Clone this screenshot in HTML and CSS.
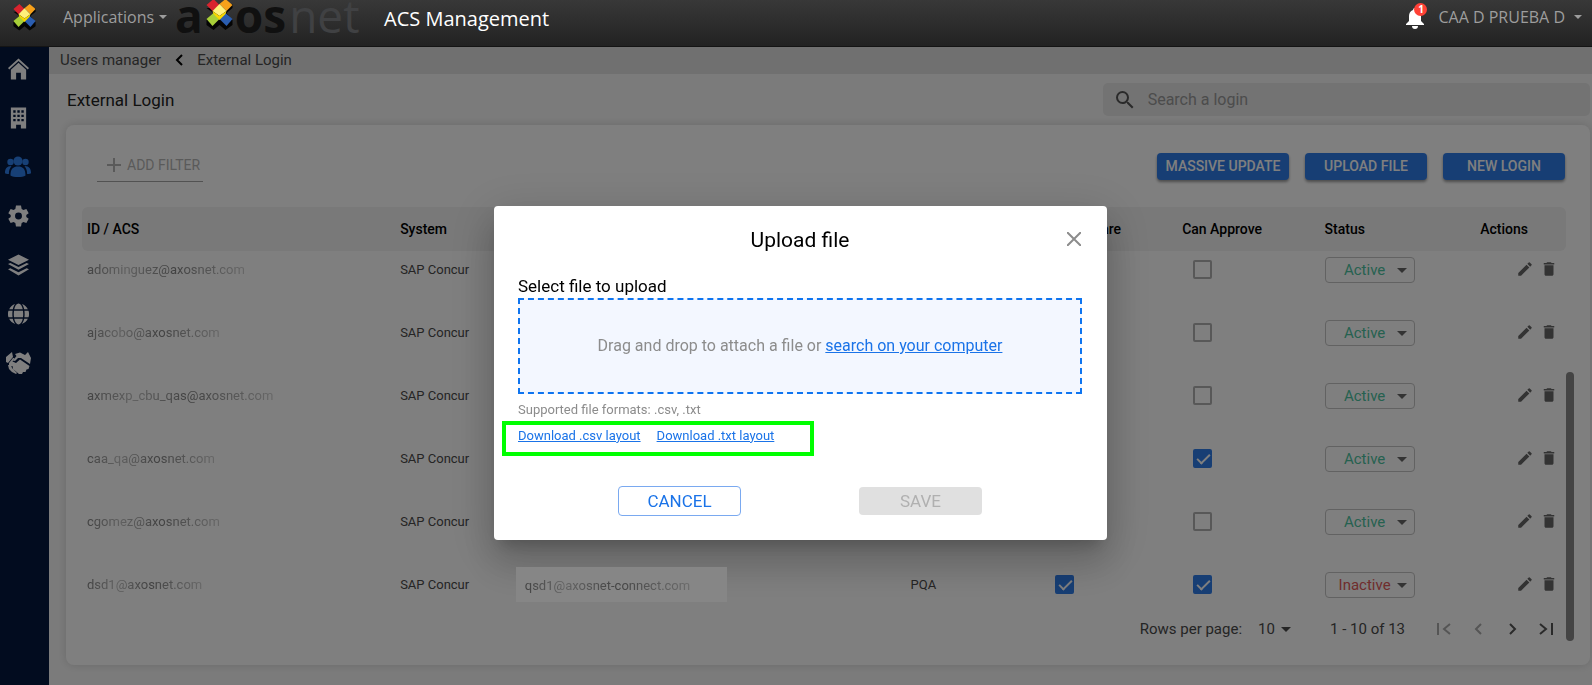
FILE: index.html
```
<!DOCTYPE html>
<html lang="en">
<head>
  <meta charset="UTF-8" />
  <meta name="viewport" content="width=device-width, initial-scale=1.0"/>
  <title>ACS Management</title>
  <link rel="stylesheet" href="styles.css">
</head>
<body>

  <!-- shared icons -->
  <svg class="defs" aria-hidden="true">
    <symbol id="cube" viewBox="0 0 28 34">
      <path fill="#050505" d="M1 9l7 5-7 7 0 5 7 5 6-5 6 5 7-5v-5l-6-7 6-5v-4l-13 4z"/>
      <path fill="#d9232e" d="M1 6l7-6 6 6-7 6z"/>
      <path fill="#f7a11a" d="M14 5l6-5 7 6-6 6z"/>
      <path fill="#a8cf38" d="M1 20l7-6 6 6-7 7z"/>
      <path fill="#2a5db0" d="M14 20l6-6 7 6-6 7z"/>
      <path fill="#fff07a" d="M7 12l7-7 7 7-7 5z"/>
      <path fill="#f8d800" d="M7 12l7 5 7-5-1 3-6 6-6-6z"/>
    </symbol>
    <symbol id="pencil" viewBox="0 0 24 24"><path d="M3 17.25V21h3.75L17.81 9.94l-3.75-3.75L3 17.25zM20.71 7.04a1 1 0 0 0 0-1.41l-2.34-2.34a1 1 0 0 0-1.41 0l-1.83 1.83 3.75 3.75 1.83-1.83z"/></symbol>
    <symbol id="trash" viewBox="0 0 24 24"><path d="M6 19c0 1.1.9 2 2 2h8c1.1 0 2-.9 2-2V7H6v12zM19 4h-3.5l-1-1h-5l-1 1H5v2h14V4z"/></symbol>
  </svg>

  <header class="topbar">
    <svg class="mark" aria-hidden="true"><use href="#cube"/></svg>
    <button class="menu apps">Applications <i class="caret"></i></button>
    <div class="brand"><b>a</b><svg class="brand-x" aria-hidden="true"><use href="#cube"/></svg><b>os</b><span>net</span></div>
    <h1>ACS Management</h1>
    <button class="bell" aria-label="Notifications">
      <svg viewBox="0 0 20 22"><path fill="#fff" d="M10 1a2 2 0 0 1 2 2c3 1 4 3.500 4 6v5l3 3v1H1v-1l3-3V9c0-2.500 1-5 4-6a2 2 0 0 1 2-2zM7 19h6a3 3 0 0 1-6 0z"/></svg>
      <span class="badge">1</span>
    </button>
    <button class="menu user">CAA D PRUEBA D <i class="caret"></i></button>
  </header>

  <div class="layout">
    <nav class="sidebar">
      <a href="#" aria-label="Home"><svg viewBox="0 0 22 22"><path d="M11 0l11 10-1.300 1.400L11 2.700 1.300 11.400 0 10z"/><path d="M11 4.500l8 7.200V22h-5.500v-7h-5v7H3V11.700z"/></svg></a>
      <a href="#" aria-label="Companies"><svg viewBox="0 0 22 22"><path fill-rule="evenodd" d="M3 0h16v22h-5.500v-4h-5v4H3zM5.500 3v2.500H8V3zM9.800 3v2.500h2.500V3zM14 3v2.500h2.500V3zM5.500 7.500V10H8V7.500zM9.800 7.500V10h2.500V7.500zM14 7.500V10h2.500V7.500zM5.500 12v2.500H8V12zM9.800 12v2.500h2.500V12zM14 12v2.500h2.500V12z"/></svg></a>
      <a href="#" class="active" aria-label="Users"><svg class="wide" viewBox="0 0 26 22"><circle cx="13" cy="5" r="4.600"/><circle cx="5.500" cy="6" r="3.200"/><circle cx="20.500" cy="6" r="3.200"/><path d="M5.500 19.500C5.500 13 8 10.500 13 10.500s7.500 2.500 7.500 9c-3 2-12 2-15 0zM0 17c0-4 1.500-7 6.500-7-2 2.500-2.600 5-2.600 8-2 0-3.900-.3-3.900-1zM26 17c0-4-1.500-7-6.500-7 2 2.500 2.600 5 2.600 8 2 0 3.900-.3 3.900-1z"/></svg></a>
      <a href="#" aria-label="Settings"><svg viewBox="2 2 20 20"><path d="M19.400 13a7.500 7.500 0 0 0 0-2l2.300-1.700-2.200-4-2.800 1.100a7 7 0 0 0-1.700-1L14.400 2H9.600L9 5.400a7 7 0 0 0-1.700 1L4.500 5.300l-2.200 4L4.600 11a7.500 7.500 0 0 0 0 2l-2.300 1.700 2.200 4 2.800-1.100a7 7 0 0 0 1.700 1l.6 3.400h4.800l.6-3.400a7 7 0 0 0 1.700-1l2.800 1.100 2.200-4zM12 15.300a3.300 3.300 0 1 1 0-6.600 3.300 3.300 0 0 1 0 6.600z"/></svg></a>
      <a href="#" aria-label="Layers"><svg viewBox="0 0 22 22"><path d="M11 0l11 5.500L11 11 0 5.500zM0 10l2.500-1.200L11 13l8.500-4.200L22 10l-11 6zM0 15.500l2.500-1.200L11 18.500l8.500-4.200 2.500 1.200L11 22z"/></svg></a>
      <a href="#" aria-label="Regions"><svg viewBox="0 0 22 22"><path d="M11 0c2 0 3.800 2.500 4.500 6h-9C7.200 2.500 9 0 11 0zM7.500 .6C6.300 2 5.500 4 5 6H1.200C2.500 3.400 4.700 1.500 7.500 .6zM14.500 .6c2.800 .9 5 2.800 6.300 5.400H17c-.5-2-1.300-4-2.500-5.400zM.5 7.500h4.300a26 26 0 0 0 0 7H.5a11 11 0 0 1 0-7zM6.300 7.500h9.400a26 26 0 0 1 0 7H6.300a26 26 0 0 1 0-7zM17.200 7.500h4.300a11 11 0 0 1 0 7h-4.300a26 26 0 0 0 0-7zM6.500 16h9c-.7 3.500-2.500 6-4.500 6s-3.800-2.500-4.500-6zM1.200 16H5c.5 2 1.300 4 2.500 5.400-2.800-.9-5-2.800-6.300-5.400zM17 16h3.800c-1.300 2.600-3.500 4.500-6.300 5.400C15.700 20 16.500 18 17 16z"/></svg></a>
      <a href="#" aria-label="Partners"><svg class="wide" viewBox="0 0 26 22"><path d="M1 5l6-5 1 5-5 6-2-1zM10 2l5-1.500L20 3l3-3 3 6-1 6-9-6-3 0-3 3-2-.5 3.500-4.500zM4 11l4-5 1.500 0-2 3.500 3.500 1.500 4-3.500 9.500 6.500-1 3-2 .5-1 2.500-2.500 0-1 2-3 0-6-5-.5-3-3.500-.5zM3 13l3 0 1 3 5 5-1 1-4-2-3-3z"/></svg></a>
    </nav>

    <main class="content">
      <div class="breadcrumb">
        <a href="#">Users manager</a>
        <svg viewBox="0 0 8 12"><path d="M7 1L2 6l5 5" fill="none" stroke="#000" stroke-width="2"/></svg>
        <a href="#">External Login</a>
      </div>

      <div class="title-row">
        <h2>External Login</h2>
        <label class="search">
          <svg viewBox="3 3 18 18"><path d="M15.500 14h-.79l-.28-.27A6.470 6.470 0 0 0 16 9.500 6.500 6.500 0 1 0 9.500 16c1.610 0 3.090-.59 4.230-1.570l.27.28v.79l5 4.990L20.490 19l-4.990-5zm-6 0C7.010 14 5 11.990 5 9.500S7.010 5 9.500 5 14 7.010 14 9.500 11.990 14 9.500 14z"/></svg>
          <input type="text" placeholder="Search a login" aria-label="Search a login">
        </label>
      </div>

      <section class="card">
        <div class="toolbar">
          <button class="add-filter"><svg viewBox="0 0 14 14"><path d="M7 0v14M0 7h14" stroke="currentColor" stroke-width="2"/></svg>ADD FILTER</button>
          <div class="actions">
            <button class="btn massive">MASSIVE UPDATE</button>
            <button class="btn">UPLOAD FILE</button>
            <button class="btn">NEW LOGIN</button>
          </div>
        </div>

        <table>
          <colgroup>
            <col class="c-id"><col class="c-system"><col class="c-login"><col class="c-env"><col class="c-prepare"><col class="c-approve"><col class="c-status"><col class="c-actions">
          </colgroup>
          <thead>
            <tr><th>ID / ACS</th><th>System</th><th></th><th></th><th>Can Prepare</th><th>Can Approve</th><th>Status</th><th class="right">Actions</th></tr>
          </thead>
          <tbody>
            <tr>
              <td><span class="faded">adominguez@axosnet.com</span></td><td>SAP Concur</td><td></td><td></td>
              <td class="check"></td>
              <td class="check"><input type="checkbox" aria-label="Can approve"></td>
              <td><span class="status"><select aria-label="Status"><option>Active</option></select><i class="caret"></i></span></td>
              <td><div class="tools"><button aria-label="Edit"><svg><use href="#pencil"/></svg></button><button aria-label="Delete"><svg><use href="#trash"/></svg></button></div></td>
            </tr>
            <tr>
              <td><span class="faded">ajacobo@axosnet.com</span></td><td>SAP Concur</td><td></td><td></td>
              <td class="check"></td>
              <td class="check"><input type="checkbox" aria-label="Can approve"></td>
              <td><span class="status"><select aria-label="Status"><option>Active</option></select><i class="caret"></i></span></td>
              <td><div class="tools"><button aria-label="Edit"><svg><use href="#pencil"/></svg></button><button aria-label="Delete"><svg><use href="#trash"/></svg></button></div></td>
            </tr>
            <tr>
              <td><span class="faded">axmexp_cbu_qas@axosnet.com</span></td><td>SAP Concur</td><td></td><td></td>
              <td class="check"></td>
              <td class="check"><input type="checkbox" aria-label="Can approve"></td>
              <td><span class="status"><select aria-label="Status"><option>Active</option></select><i class="caret"></i></span></td>
              <td><div class="tools"><button aria-label="Edit"><svg><use href="#pencil"/></svg></button><button aria-label="Delete"><svg><use href="#trash"/></svg></button></div></td>
            </tr>
            <tr>
              <td><span class="faded">caa_qa@axosnet.com</span></td><td>SAP Concur</td><td></td><td></td>
              <td class="check"></td>
              <td class="check"><input type="checkbox" aria-label="Can approve" checked></td>
              <td><span class="status"><select aria-label="Status"><option>Active</option></select><i class="caret"></i></span></td>
              <td><div class="tools"><button aria-label="Edit"><svg><use href="#pencil"/></svg></button><button aria-label="Delete"><svg><use href="#trash"/></svg></button></div></td>
            </tr>
            <tr>
              <td><span class="faded">cgomez@axosnet.com</span></td><td>SAP Concur</td><td></td><td></td>
              <td class="check"></td>
              <td class="check"><input type="checkbox" aria-label="Can approve"></td>
              <td><span class="status"><select aria-label="Status"><option>Active</option></select><i class="caret"></i></span></td>
              <td><div class="tools"><button aria-label="Edit"><svg><use href="#pencil"/></svg></button><button aria-label="Delete"><svg><use href="#trash"/></svg></button></div></td>
            </tr>
            <tr>
              <td><span class="faded">dsd1@axosnet.com</span></td><td>SAP Concur</td>
              <td class="login"><div class="patch"><span class="faded">qsd1@axosnet-connect.com</span></div></td>
              <td>PQA</td>
              <td class="check"><input type="checkbox" aria-label="Can prepare" checked></td>
              <td class="check"><input type="checkbox" aria-label="Can approve" checked></td>
              <td><span class="status off"><select aria-label="Status"><option>Inactive</option></select><i class="caret"></i></span></td>
              <td><div class="tools"><button aria-label="Edit"><svg><use href="#pencil"/></svg></button><button aria-label="Delete"><svg><use href="#trash"/></svg></button></div></td>
            </tr>
          </tbody>
        </table>

        <div class="pager">
          <label for="rows">Rows per page:</label>
          <span class="rows"><select id="rows"><option>10</option></select><i class="caret"></i></span>
          <span class="range">1 - 10 of 13</span>
          <div class="pages">
            <button disabled aria-label="First page"><svg viewBox="0 0 14 12"><path d="M1 0v12M13 1L7 6l6 5"/></svg></button>
            <button disabled aria-label="Previous page"><svg viewBox="0 0 14 12"><path d="M10 1L5 6l5 5"/></svg></button>
            <button aria-label="Next page"><svg viewBox="0 0 14 12"><path d="M5 1l5 5-5 5"/></svg></button>
            <button aria-label="Last page"><svg viewBox="0 0 14 12"><path d="M13 0v12M1 1l6 5-6 5"/></svg></button>
          </div>
        </div>
        <div class="scroll-thumb"></div>
      </section>
    </main>
  </div>

  <div class="backdrop">
    <div class="modal" role="dialog" aria-labelledby="modal-title">
      <div class="modal-head">
        <h3 id="modal-title">Upload file</h3>
        <button class="close" aria-label="Close"><svg viewBox="0 0 14 14"><path d="M0 0l14 14M14 0L0 14" stroke="#8c8c8c" stroke-width="2"/></svg></button>
      </div>
      <p class="field-label">Select file to upload</p>
      <div class="dropzone">Drag and drop to attach a file or&nbsp;<a href="#">search on your computer</a></div>
      <p class="hint">Supported file formats: .csv, .txt</p>
      <div class="downloads">
        <a href="#">Download .csv layout</a>
        <a href="#">Download .txt layout</a>
      </div>
      <div class="modal-actions">
        <button class="cancel">CANCEL</button>
        <button class="save" disabled>SAVE</button>
      </div>
    </div>
  </div>

</body>
</html>
```

FILE: styles.css
```
* {
  box-sizing: border-box;
}
body {
  margin: 0;
  font-family: Roboto, "Liberation Sans", sans-serif;
  font-size: 14px;
  color: #4a4a4a;
  background-color: #f7f7f7;
}
h1, h2, h3, p {
  margin: 0;
  font-weight: normal;
}
button, input, select {
  font-family: inherit;
  font-size: inherit;
  color: inherit;
  border: none;
  background: none;
  padding: 0;
  margin: 0;
}
button {
  cursor: pointer;
}
a {
  color: inherit;
  text-decoration: none;
}
.defs {
  display: none;
}
.caret {
  display: inline-block;
  border: 5px solid transparent;
  border-top-color: currentColor;
  border-bottom: none;
}

/* top bar */
.topbar {
  display: flex;
  align-items: flex-start;
  height: 47px;
  padding: 0 10px 0 12px;
  overflow: hidden;
  font-family: "Open Sans", "Noto Sans", sans-serif;
  background: linear-gradient(#383838, #222);
  border-bottom: 1px solid #141414;
}
.mark {
  width: 25px;
  height: 29px;
  margin-top: 4px;
}
.menu {
  display: flex;
  align-items: center;
  gap: 5px;
  height: 34px;
  font-size: 16px;
  color: #9d9d9d;
}
.menu .caret {
  border-width: 4px;
  border-bottom: none;
}
.apps {
  width: 103px;
  margin-left: 26px;
}
.user {
  gap: 9px;
}
.brand {
  display: flex;
  width: 184px;
  margin-left: 9px;
  font-size: 46px;
  line-height: 30px;
  color: #101010;
}
.brand span {
  margin-left: 3px;
  color: #404143;
}
.brand-x {
  flex: none;
  width: 29px;
  height: 34px;
  margin: -1px 1px 0 2px;
}
.topbar h1 {
  flex: 1;
  margin-left: 25px;
  font-size: 20px;
  line-height: 37px;
  color: #fff;
}
.bell {
  position: relative;
  width: 20px;
  height: 22px;
  margin: 7px 13px 0 0;
}
.bell svg {
  width: 20px;
  height: 22px;
}
.badge {
  position: absolute;
  top: -4px;
  right: -2px;
  width: 13px;
  height: 13px;
  border-radius: 50%;
  background-color: #ff4136;
  color: #fff;
  font-size: 10px;
  font-weight: bold;
  line-height: 13px;
}

/* page */
.layout {
  display: flex;
  min-height: calc(100vh - 47px);
}
.sidebar {
  display: flex;
  flex-direction: column;
  gap: 27px;
  width: 49px;
  padding: 11px 5px;
  background-color: #04183e;
}
.sidebar a {
  display: flex;
  justify-content: center;
  width: 26px;
  height: 22px;
}
.sidebar svg {
  width: 21px;
  height: 22px;
  fill: #fff;
}
.sidebar svg.wide {
  width: 26px;
}
.sidebar .active svg {
  fill: #2f80ed;
}
.content {
  flex: 1;
}
.breadcrumb {
  display: flex;
  align-items: center;
  gap: 14px;
  height: 27px;
  padding: 0 11px 2px;
  font-size: 15px;
  background-color: #e0e0e0;
}
.breadcrumb svg {
  width: 8px;
  height: 12px;
}
.title-row {
  display: flex;
  justify-content: space-between;
  align-items: center;
  padding: 9px 2px 9px 18px;
}
.title-row h2 {
  font-size: 17px;
  color: #222;
}
.search {
  display: flex;
  align-items: center;
  gap: 14px;
  width: 32%;
  height: 33px;
  padding: 0 13px;
  border-radius: 5px;
  background-color: #e6e6e6;
}
.search svg {
  width: 18px;
  height: 18px;
  fill: #555;
}
.search input {
  flex: 1;
  font-size: 16px;
}
.search input::placeholder {
  color: #999;
}

/* card */
.card {
  position: relative;
  height: 540px;
  margin: 0 2px 20px 17px;
  padding: 28px 24px 0 16px;
  border-radius: 8px;
  background-color: #fff;
  box-shadow: 0 0 10px rgba(0,0,0,0.15);
}
.toolbar {
  display: flex;
  justify-content: space-between;
  height: 54px;
  padding: 0 1px 0 15px;
}
.add-filter {
  display: flex;
  align-items: center;
  gap: 6px;
  width: 106px;
  height: 29px;
  padding: 0 0 4px 10px;
  color: #b5b5b5;
  border-bottom: 1px solid #a5a5a5;
}
.add-filter svg {
  width: 14px;
  height: 14px;
}
.actions {
  display: flex;
  gap: 16px;
}
.btn {
  width: 122px;
  height: 27px;
  padding-bottom: 2px;
  border-radius: 4px;
  font-weight: 500;
  color: #fff;
  background-color: #2f7de9;
  box-shadow: 0 2px 3px rgba(0,0,0,0.4);
}
.massive {
  width: 132px;
}
table {
  width: 100%;
  table-layout: fixed;
  border-collapse: collapse;
}
.c-id { width: 21.1%; }
.c-system { width: 8.4%; }
.c-login { width: 26%; }
.c-env { width: 9%; }
.c-prepare { width: 9.3%; }
.c-approve { width: 9.6%; }
.c-status { width: 10.3%; }
.c-actions { width: 6.3%; }
th {
  height: 44px;
  padding: 0 5px;
  font-size: 14px;
  font-weight: 500;
  text-align: left;
  color: #000;
  background-color: #f2f2f2;
}
th:first-child {
  border-radius: 6px 0 0 6px;
}
th:last-child {
  border-radius: 0 6px 6px 0;
}
td {
  height: 63px;
  padding: 0 5px 26px;
  font-size: 13px;
}
th.right {
  padding-right: 38px;
  text-align: right;
}
td.check {
  padding-left: 16px;
}
td.login {
  padding-left: 0;
}
/* addresses are partly wiped out */
.faded {
  color: #666;
  -webkit-mask-image: linear-gradient(90deg, rgba(0,0,0,0.8), rgba(0,0,0,0.4) 25%, rgba(0,0,0,0.8) 55%, rgba(0,0,0,0.3));
  mask-image: linear-gradient(90deg, rgba(0,0,0,0.8), rgba(0,0,0,0.4) 25%, rgba(0,0,0,0.8) 55%, rgba(0,0,0,0.3));
}
.patch {
  position: relative;
  z-index: 20;
  width: 211px;
  height: 35px;
  margin-left: -4px;
  padding: 0 9px;
  line-height: 37px;
  background-color: #868686;
}
.patch .faded {
  color: #333;
}
input[type="checkbox"] {
  appearance: none;
  display: block;
  width: 19px;
  height: 19px;
  border: 2px solid #b0b0b0;
  border-radius: 2px;
}
input[type="checkbox"]:checked {
  position: relative;
  border-color: #2f7de9;
  background-color: #2f7de9;
}
input[type="checkbox"]:checked::after {
  content: "";
  position: absolute;
  top: 0;
  left: 5px;
  width: 5px;
  height: 11px;
  border: solid #fff;
  border-width: 0 2px 2px 0;
  transform: rotate(45deg);
}
.status {
  position: relative;
  display: block;
  width: 90px;
  height: 26px;
  color: #4dc3a0;
}
.off {
  color: #e05a5a;
}
td .status select {
  appearance: none;
  width: 90px;
  height: 26px;
  padding: 0 20px 0 10px;
  font-size: 15px;
  text-align: center;
  text-align-last: center;
  border: 1px solid #c4c4c4;
  border-radius: 4px;
}
.status .caret {
  position: absolute;
  top: 11px;
  right: 8px;
  color: #666;
}
.tools {
  display: flex;
  justify-content: flex-end;
  gap: 6px;
  padding: 0 3px 2px 0;
}
.tools button, .tools svg {
  display: block;
  width: 18px;
  height: 18px;
  fill: #666;
}
.pager {
  display: flex;
  justify-content: flex-end;
  align-items: center;
  height: 24px;
  margin-top: -12px;
  padding-right: 13px;
  font-size: 15px;
}
.rows {
  display: flex;
  align-items: center;
  gap: 6px;
  margin: 0 39px 0 16px;
}
.rows select {
  appearance: none;
}
.pages {
  display: flex;
  gap: 20px;
  margin-left: 32px;
}
.pages button, .pages svg {
  display: block;
  width: 14px;
  height: 12px;
}
.pages path {
  fill: none;
  stroke: #555;
  stroke-width: 2;
}
.pages button:disabled path {
  stroke: #aaa;
}
.scroll-thumb {
  position: absolute;
  top: 247px;
  right: 16px;
  width: 8px;
  height: 269px;
  border-radius: 4px;
  background-color: #888;
}

/* upload dialog */
.backdrop {
  position: fixed;
  top: 47px;
  right: 0;
  bottom: 0;
  left: 0;
  z-index: 10;
  display: flex;
  justify-content: center;
  align-items: center;
  padding: 13px 0 0 9px;
  background-color: rgba(0,0,0,0.5);
}
.modal {
  width: 613px;
  padding: 0 25px 24px 24px;
  border-radius: 4px;
  background-color: #fff;
  box-shadow: 0 11px 15px -7px rgba(0,0,0,0.2), 0 24px 38px 3px rgba(0,0,0,0.14), 0 9px 46px 8px rgba(0,0,0,0.12);
}
.modal-head {
  position: relative;
  height: 68px;
}
.modal-head h3 {
  font-size: 21px;
  line-height: 68px;
  text-align: center;
  color: #000;
}
.close {
  position: absolute;
  top: 26px;
  right: 1px;
  width: 14px;
  height: 14px;
}
.close svg {
  display: block;
}
.field-label {
  font-size: 17px;
  line-height: 24px;
  color: #000;
}
.dropzone {
  display: flex;
  justify-content: center;
  align-items: center;
  height: 96px;
  border: 2px dashed #0f75f0;
  font-size: 16px;
  color: #8c8c8c;
  background-color: #f3f7ff;
}
.dropzone a, .downloads a {
  color: #1a73e8;
  text-decoration: underline;
}
.hint {
  margin-top: 6px;
  font-size: 13px;
  line-height: 20px;
  color: #8c8c8c;
}
.downloads {
  display: flex;
  gap: 16px;
  width: 312px;
  height: 35px;
  margin: 1px 0 30px -16px;
  padding: 0 12px;
  border: 4px solid #00ff00;
  font-size: 13px;
  line-height: 22px;
}
.modal-actions {
  display: flex;
  justify-content: center;
  align-items: center;
  gap: 118px;
}
.modal-actions button {
  width: 123px;
  height: 30px;
  border-radius: 4px;
  font-size: 17px;
}
.modal-actions .cancel {
  color: #1a73e8;
  border: 1px solid #7aa9f0;
}
.modal-actions .save {
  height: 28px;
  color: #b0b0b0;
  background-color: #e0e0e0;
}
```
